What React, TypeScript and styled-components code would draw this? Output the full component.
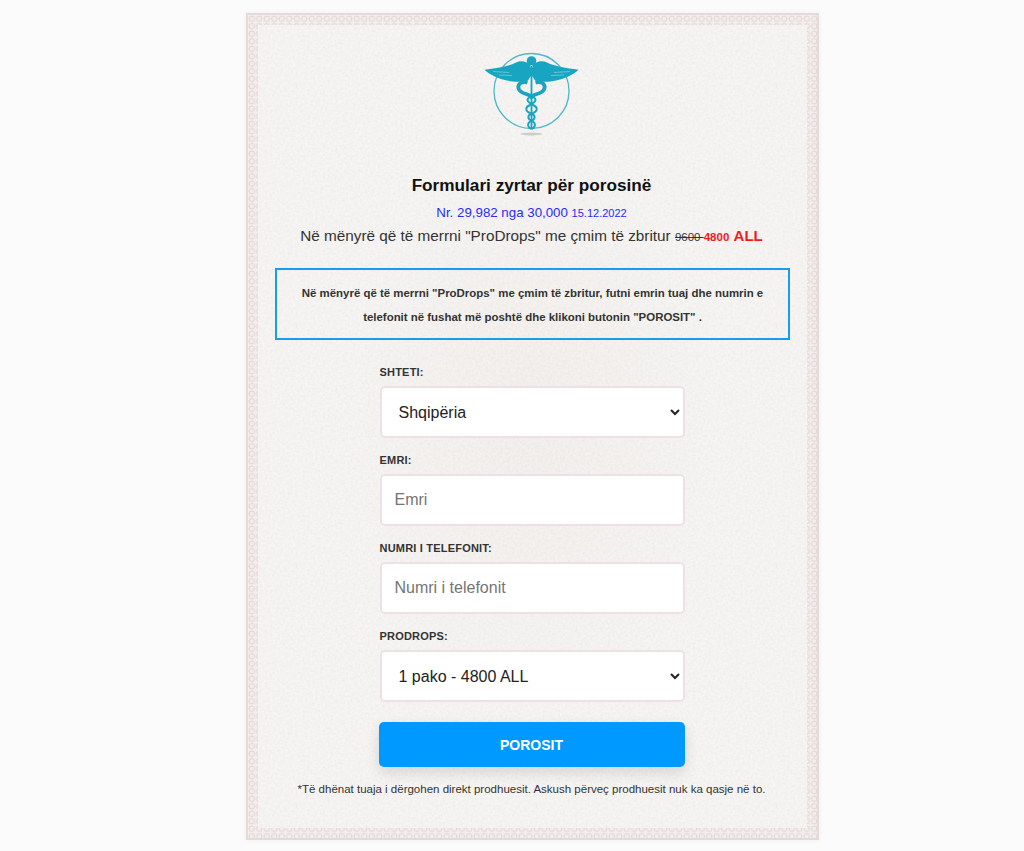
import React from 'react'
import styled, { createGlobalStyle } from 'styled-components'

const paperGrain = `url("data:image/svg+xml,%3Csvg xmlns='http://www.w3.org/2000/svg' width='240' height='240'%3E%3Cfilter id='n'%3E%3CfeTurbulence type='fractalNoise' baseFrequency='0.4' numOctaves='2' stitchTiles='stitch'/%3E%3CfeColorMatrix values='0 0 0 0 0.45 0 0 0 0 0.42 0 0 0 0 0.38 0 0 0 0.22 -0.075'/%3E%3C/filter%3E%3Crect width='240' height='240' filter='url(%23n)'/%3E%3C/svg%3E")`

const Global = createGlobalStyle`
  html, body { margin: 0; padding: 0; background: #fbfbfb; }
  body { font-family: "Liberation Sans", Arial, sans-serif; color: #333; }
`

const Page = styled.div`
  display: flex; justify-content: center;
  padding: 13px 0 11px 41px;
  width: 1024px; height: 851px; box-sizing: border-box;
`

const Certificate = styled.main`
  width: 573px; height: 827px; box-sizing: border-box;
  border: 2px solid #e4dad8;
  padding: 10px;
  background-color: #f3eeec;
  background-image:
    radial-gradient(circle at 50% 50%, transparent 1.8px, #e3d8d8 2.2px, #e3d8d8 3px, transparent 3.5px);
  background-size: 7.5px 7.5px;
  box-shadow: 0 0 6px rgba(0,0,0,0.05);
`

const Paper = styled.div`
  height: 100%; box-sizing: border-box;
  display: flex; flex-direction: column; align-items: center;
  padding: 28px 17px 0 15px;
  background-color: #f6f5f3;
  background-image:
    ${paperGrain},
    radial-gradient(ellipse 180px 280px at 50% 50%, rgba(240,232,228,0.45), transparent);
`

const LogoMark = styled.svg`
  display: block; width: 96px; height: 86px; overflow: visible;
`

const Title = styled.h1`
  margin: 37px 0 0; font-size: 17.2px; line-height: 18px; font-weight: 700; color: #111;
`

const Counter = styled.div`
  margin-top: 12px; font-size: 13.3px; line-height: 14px; color: #2a2aff;
`

const CounterDate = styled.span`
  font-size: 11px;
`

const Offer = styled.p`
  margin: 6px 0 0; font-size: 15.3px; line-height: 20px; color: #333;
`

const OldPrice = styled.s`
  font-size: 11.5px; color: #333;
`

const NewPrice = styled.b`
  font-size: 11.5px; color: #f01c1c;
`

const Currency = styled.b`
  font-size: 15px; color: #f01c1c;
`

const Notice = styled.div`
  margin: 21px 0 0 2px; width: 515px; height: 72px; box-sizing: border-box;
  align-self: flex-start;
  border: 2px solid #1a9bf2;
  display: flex; align-items: center; justify-content: center;
  padding: 1px 20px 0;
  font-size: 11.45px; line-height: 24px; font-weight: 700; text-align: center; color: #333;
`

const OrderForm = styled.form`
  width: 306px; margin-top: 26px;
  display: flex; flex-direction: column;
`

const Field = styled.div`
  display: flex; flex-direction: column;
  margin-bottom: 16px;
`

const FieldLabel = styled.label`
  font-size: 11px; line-height: 12px; font-weight: 700; color: #333;
  margin: 0 0 8px 1px; letter-spacing: 0.2px;
`

const controlCss = `
  width: 305px; height: 52px; box-sizing: border-box; align-self: flex-end;
  border: 2px solid #eee0e4; border-radius: 5px;
  background: #fff; padding: 0 13px;
  font-family: "Liberation Sans", Arial, sans-serif; font-size: 16px; color: #222;
  outline: none;
`

const Select = styled.select`
  ${controlCss}
`

const Input = styled.input`
  ${controlCss}
  &::placeholder { color: #757575; opacity: 1; }
`

const Submit = styled.button`
  width: 306px; height: 45px; margin-top: 4px;
  border: none; border-radius: 5px;
  background: #0099ff; color: #fff;
  font-family: "Liberation Sans", Arial, sans-serif; font-size: 14px; font-weight: 700;
  box-shadow: 0 6px 14px rgba(0,0,0,0.12);
`

const FinePrint = styled.p`
  margin: 15px 0 0; font-size: 11.5px; line-height: 14px; color: #333; white-space: nowrap;
`

const Logo = () => (
  <LogoMark viewBox="0 0 96 86" aria-hidden>
    <circle cx="47.5" cy="38" r="37.5" fill="none" stroke="#4fb6cb" strokeWidth="1.3" />
    {/* wings */}
    <path d="M0.5 16.7 C13 15 24 13.5 32 9.5 C37 7 43 8 47.5 13 L47.5 22 L44 27.5 C38 29.5 29 29 23 27.5 C15 26 6 22 0.5 16.7Z" fill="#17a5c1" />
    <path d="M94.5 16.7 C82 15 71 13.5 63 9.5 C58 7 52 8 47.5 13 L47.5 22 L51 27.5 C57 29.5 66 29 72 27.5 C80 26 89 22 94.5 16.7Z" fill="#17a5c1" />
    <path d="M9 18.5 L25 19.5 M15 22 L28 22.5 M86 18.5 L70 19.5 M80 22 L67 22.5" stroke="#9fd6e2" strokeWidth="0.6" />
    {/* staff and ball */}
    <circle cx="47.5" cy="8" r="4.8" fill="#17a5c1" />
    <circle cx="47.5" cy="13.5" r="1.3" fill="#f6f5f3" />
    <rect x="46.6" y="13" width="1.8" height="63" fill="#17a5c1" />
    {/* snakes, heavy bodies at the top and thin tails below */}
    <path d="M43.5 29.5 C36 27.5 33 32.5 35 36.5 C37.5 41.5 45 40.5 50 44.5" fill="none" stroke="#17a5c1" strokeWidth="3.8" />
    <path d="M51.5 29.5 C59 27.5 62 32.5 60 36.5 C57.5 41.5 50 40.5 45 44.5" fill="none" stroke="#17a5c1" strokeWidth="3.8" />
    <path d="M50 44.5 C54 48 49 50 46 52 C41 54 41 58 46 60 C52 62 52 66 47 68 C43 70 43 74 47.5 76" fill="none" stroke="#17a5c1" strokeWidth="1.9" />
    <path d="M45 44.5 C41 48 46 50 49 52 C54 54 54 58 49 60 C43 62 43 66 48 68 C52 70 52 74 47.5 76" fill="none" stroke="#17a5c1" strokeWidth="1.9" />
    <ellipse cx="47.5" cy="81" rx="11" ry="1.5" fill="#cdcdcd" />
  </LogoMark>
)

export default function App() {
  return (
    <>
      <Global />
      <Page>
        <Certificate>
          <Paper>
            <Logo />
            <Title>Formulari zyrtar për porosinë</Title>
            <Counter>Nr. 29,982 nga 30,000 <CounterDate>15.12.2022</CounterDate></Counter>
            <Offer>
              Në mënyrë që të merrni "ProDrops" me çmim të zbritur <OldPrice>9600 </OldPrice><NewPrice>4800</NewPrice> <Currency>ALL</Currency>
            </Offer>
            <Notice>
              Në mënyrë që të merrni "ProDrops" me çmim të zbritur, futni emrin tuaj dhe numrin e telefonit në fushat më poshtë dhe klikoni butonin "POROSIT" .
            </Notice>
            <OrderForm onSubmit={(e) => e.preventDefault()}>
              <Field>
                <FieldLabel>SHTETI:</FieldLabel>
                <Select defaultValue="al"><option value="al">Shqipëria</option></Select>
              </Field>
              <Field>
                <FieldLabel>EMRI:</FieldLabel>
                <Input placeholder="Emri" />
              </Field>
              <Field>
                <FieldLabel>NUMRI I TELEFONIT:</FieldLabel>
                <Input placeholder="Numri i telefonit" />
              </Field>
              <Field>
                <FieldLabel>PRODROPS:</FieldLabel>
                <Select defaultValue="1"><option value="1">1 pako - 4800 ALL</option></Select>
              </Field>
              <Submit type="submit">POROSIT</Submit>
            </OrderForm>
            <FinePrint>*Të dhënat tuaja i dërgohen direkt prodhuesit. Askush përveç prodhuesit nuk ka qasje në to.</FinePrint>
          </Paper>
        </Certificate>
      </Page>
    </>
  )
}
